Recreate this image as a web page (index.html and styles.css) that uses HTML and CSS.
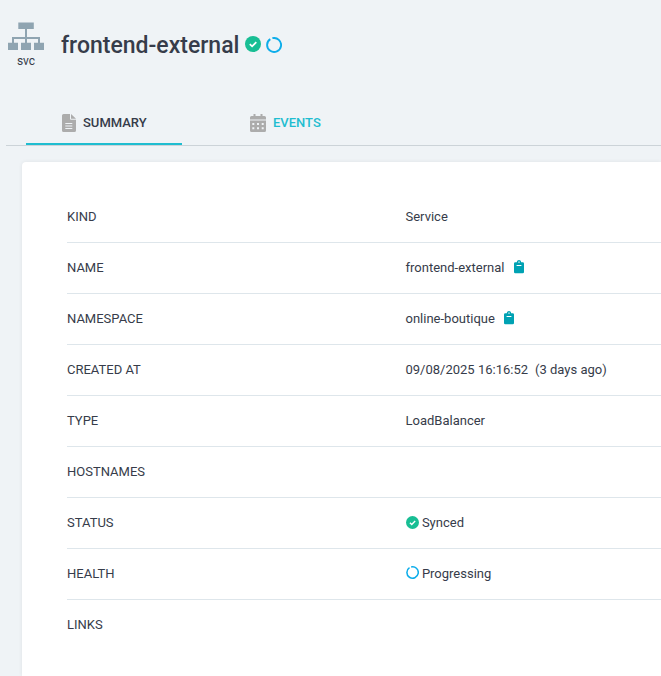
FILE: index.html
```html
<!DOCTYPE html>
<html lang="en">
<head>
<meta charset="utf-8">
<title>frontend-external</title>
<link rel="stylesheet" href="styles.css">
</head>
<body>
<svg class="defs" aria-hidden="true">
  <symbol id="check" viewBox="0 0 16 16"><circle cx="8" cy="8" r="8" fill="#18be94"/><path d="M4.8 8.2l2.3 2.2 4.2-4.2" fill="none" stroke="#fff" stroke-width="1.7"/></symbol>
  <symbol id="progress" viewBox="0 0 16 16"><path d="M6 1.3A7 7 0 1 1 4 2.3" fill="none" stroke="#0dadea" stroke-width="1.9" transform="rotate(3 8 8)"/></symbol>
  <symbol id="clip" viewBox="0 0 10 14"><path fill="#00a2b3" fill-rule="evenodd" d="M1.3 2.2H2.8C3 .9 3.9 0 5 0S7 .9 7.2 2.2H8.7A1.3 1.3 0 0 1 10 3.5V12A1.3 1.3 0 0 1 8.7 13.3H1.3A1.3 1.3 0 0 1 0 12V3.5A1.3 1.3 0 0 1 1.3 2.2ZM4.4 1.5V2.7H5.6V1.5ZM2.6 5V5.9H7.4V5Z"/></symbol>
</svg>
<header class="header">
  <div class="kind">
    <svg width="36" height="28" viewBox="0 0 36 28"><g fill="#8fa4b1"><path d="M10.3.5h15.5v6.5H10.3zM0 20.8h10V28H0zM13 20.8h10V28H13zM26 20.8h10V28H26z"/><path d="M17 7h2v14h-2zM4 15h28v6h-2v-4H6v4H4z"/></g></svg>
    <span class="kind-name">svc</span>
  </div>
  <h1 class="title">frontend-external</h1>
  <svg class="state"><use href="#check"/></svg>
  <svg class="state state-progress"><use href="#progress"/></svg>
</header>
<nav class="tabs">
  <a class="tab active"><svg class="tab-icon" width="14" height="18" viewBox="0 0 14 18"><path fill="#acacac" fill-rule="evenodd" d="M1.6 0H8v4.8a1 1 0 0 0 1 1h5v10.6A1.6 1.6 0 0 1 12.4 18H1.6A1.6 1.6 0 0 1 0 16.4V1.6A1.6 1.6 0 0 1 1.6 0ZM9 0l5 4.8H9ZM3.3 9v1h7V9ZM3.3 11.5v1h7v-1ZM3.3 14v1h7v-1Z"/></svg>SUMMARY</a>
  <a class="tab"><svg class="tab-icon" width="16" height="18" viewBox="0 0 16 18"><path fill="#acacac" fill-rule="evenodd" d="M3.5 0h2v2h5V0h2v2h2A1.5 1.5 0 0 1 16 3.5V5.5H0v-2A1.5 1.5 0 0 1 1.5 2h2ZM0 6.5h16v10a1.5 1.5 0 0 1-1.5 1.5h-13A1.5 1.5 0 0 1 0 16.5ZM2.3 9v2h2V9ZM7 9v2h2V9ZM11.7 9v2h2V9ZM2.3 13.2v2h2v-2ZM7 13.2v2h2v-2ZM11.7 13.2v2h2v-2Z"/></svg>EVENTS</a>
</nav>
<main class="card">
  <div class="row"><span>KIND</span><span>Service</span></div>
  <div class="row"><span>NAME</span><span>frontend-external<svg class="clip"><use href="#clip"/></svg></span></div>
  <div class="row"><span>NAMESPACE</span><span>online-boutique<svg class="clip"><use href="#clip"/></svg></span></div>
  <div class="row"><span>CREATED AT</span><span>09/08/2025 16:16:52<span class="ago">(3 days ago)</span></span></div>
  <div class="row"><span>TYPE</span><span>LoadBalancer</span></div>
  <div class="row"><span>HOSTNAMES</span><span></span></div>
  <div class="row"><span>STATUS</span><span><svg class="mini"><use href="#check"/></svg>Synced</span></div>
  <div class="row"><span>HEALTH</span><span><svg class="mini mini-progress"><use href="#progress"/></svg>Progressing</span></div>
  <div class="row"><span>LINKS</span><span></span></div>
</main>
</body>
</html>
```
FILE: styles.css
```css
* { box-sizing: border-box; }
body {
  margin: 0;
  height: 676px;
  overflow: hidden;
  background: #eff3f6;
  color: #363c4a;
  font-family: Roboto, sans-serif;
  font-size: 13px;
}
.defs { display: none; }
.header { display: flex; height: 100px; padding: 22px 0 0 8px; }
.kind { display: flex; flex-direction: column; align-items: center; width: 36px; }
.kind svg { flex: none; }
.kind-name { font-size: 12px; line-height: 14px; margin-top: 4px; }
.title { margin: 8px 5px 0 17px; width: 179px; white-space: nowrap; font-size: 23px; font-weight: 500; line-height: 32px; }
.state { width: 16px; height: 16px; margin-top: 14px; }
.state-progress { margin: 15px 0 0 5px; }
.tabs { display: flex; height: 46px; margin-left: 6px; padding-left: 20px; border-bottom: 1px solid #ccd3d8; }
.tab { display: flex; align-items: center; width: 156px; padding-left: 36px; font-weight: 500; color: #1fbdd0; }
.tab + .tab { padding-left: 68px; }
.tab.active { color: #363c4a; border-bottom: 2px solid #1fbdd0; padding-top: 2px; }
.tab-icon { margin: 1px 7px 0 0; flex: none; }
.card {
  height: 514px;
  margin: 16px 0 0 22px;
  padding: 30px 0 0 45px;
  background: #fff;
  border-radius: 4px 0 0 0;
  box-shadow: 0 0 4px rgba(0, 0, 0, .07);
}
.row { display: flex; align-items: center; height: 51px; padding-bottom: 1px; border-bottom: 1px solid #dee6eb; }
.row:last-child { border-bottom-color: transparent; }
.row > span { display: flex; align-items: center; }
.row > span:first-child { width: 338.5px; }
.ago { margin-left: 7px; }
.clip { width: 10px; height: 14px; margin-left: 9.5px; margin-top: -1px; }
.mini { width: 13px; height: 13px; margin-right: 3.4px; }
.mini-progress { margin-top: -2px; }
```
